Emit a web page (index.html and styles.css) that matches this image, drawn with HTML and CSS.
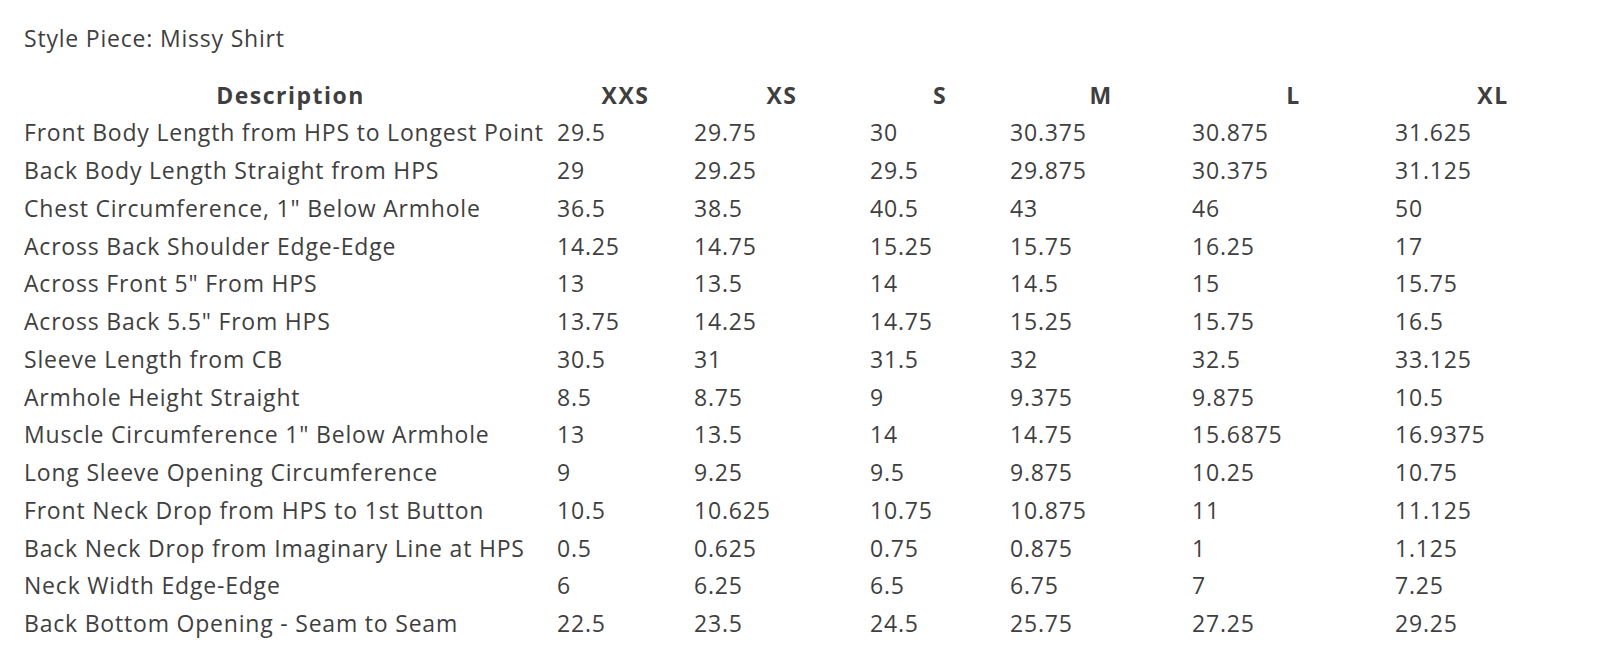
FILE: index.html
```html
<!DOCTYPE html>
<html>
<head>
<meta charset="utf-8">
<link rel="stylesheet" href="styles.css">
</head>
<body>
<div class="page">
  <p class="title">Style Piece: Missy Shirt</p>
  <table class="spec">
    <colgroup>
      <col class="c-desc"><col class="c-xxs"><col class="c-xs"><col class="c-s"><col class="c-m"><col class="c-l"><col class="c-xl">
    </colgroup>
    <thead>
      <tr><th>Description</th><th>XXS</th><th>XS</th><th>S</th><th>M</th><th>L</th><th>XL</th></tr>
    </thead>
    <tbody>
      <tr><td>Front Body Length from HPS to Longest Point</td><td>29.5</td><td>29.75</td><td>30</td><td>30.375</td><td>30.875</td><td>31.625</td></tr>
      <tr><td>Back Body Length Straight from HPS</td><td>29</td><td>29.25</td><td>29.5</td><td>29.875</td><td>30.375</td><td>31.125</td></tr>
      <tr><td>Chest Circumference, 1" Below Armhole</td><td>36.5</td><td>38.5</td><td>40.5</td><td>43</td><td>46</td><td>50</td></tr>
      <tr><td>Across Back Shoulder Edge-Edge</td><td>14.25</td><td>14.75</td><td>15.25</td><td>15.75</td><td>16.25</td><td>17</td></tr>
      <tr><td>Across Front 5" From HPS</td><td>13</td><td>13.5</td><td>14</td><td>14.5</td><td>15</td><td>15.75</td></tr>
      <tr><td>Across Back 5.5" From HPS</td><td>13.75</td><td>14.25</td><td>14.75</td><td>15.25</td><td>15.75</td><td>16.5</td></tr>
      <tr><td>Sleeve Length from CB</td><td>30.5</td><td>31</td><td>31.5</td><td>32</td><td>32.5</td><td>33.125</td></tr>
      <tr><td>Armhole Height Straight</td><td>8.5</td><td>8.75</td><td>9</td><td>9.375</td><td>9.875</td><td>10.5</td></tr>
      <tr><td>Muscle Circumference 1" Below Armhole</td><td>13</td><td>13.5</td><td>14</td><td>14.75</td><td>15.6875</td><td>16.9375</td></tr>
      <tr><td>Long Sleeve Opening Circumference</td><td>9</td><td>9.25</td><td>9.5</td><td>9.875</td><td>10.25</td><td>10.75</td></tr>
      <tr><td>Front Neck Drop from HPS to 1st Button</td><td>10.5</td><td>10.625</td><td>10.75</td><td>10.875</td><td>11</td><td>11.125</td></tr>
      <tr><td>Back Neck Drop from Imaginary Line at HPS</td><td>0.5</td><td>0.625</td><td>0.75</td><td>0.875</td><td>1</td><td>1.125</td></tr>
      <tr><td>Neck Width Edge-Edge</td><td>6</td><td>6.25</td><td>6.5</td><td>6.75</td><td>7</td><td>7.25</td></tr>
      <tr><td>Back Bottom Opening - Seam to Seam</td><td>22.5</td><td>23.5</td><td>24.5</td><td>25.75</td><td>27.25</td><td>29.25</td></tr>
    </tbody>
  </table>
</div>
</body>
</html>
```

FILE: styles.css
```css
html, body {
  margin: 0;
  padding: 0;
  background: #ffffff;
}
body {
  font-family: "Open Sans", "Liberation Sans", sans-serif;
  color: #3f3f3f;
  font-size: 23px;
  letter-spacing: 0.8px;
}
.page {
  padding: 20px 0 0 24px;
}
.title {
  margin: 0;
  line-height: 36px;
}
.spec {
  border-collapse: collapse;
  table-layout: fixed;
  width: 1567px;
  margin-top: 20.5px;
}
.c-desc { width: 533px; }
.c-xxs { width: 137px; }
.c-xs { width: 176px; }
.c-s { width: 140px; }
.c-m { width: 182px; }
.c-l { width: 203px; }
.c-xl { width: 196px; }
.spec th, .spec td {
  padding: 0;
  height: 37.75px;
  line-height: 37.75px;
  white-space: nowrap;
}
.spec th {
  font-weight: 700;
  text-align: center;
  letter-spacing: 1.5px;
}
.spec td {
  text-align: left;
}
```
